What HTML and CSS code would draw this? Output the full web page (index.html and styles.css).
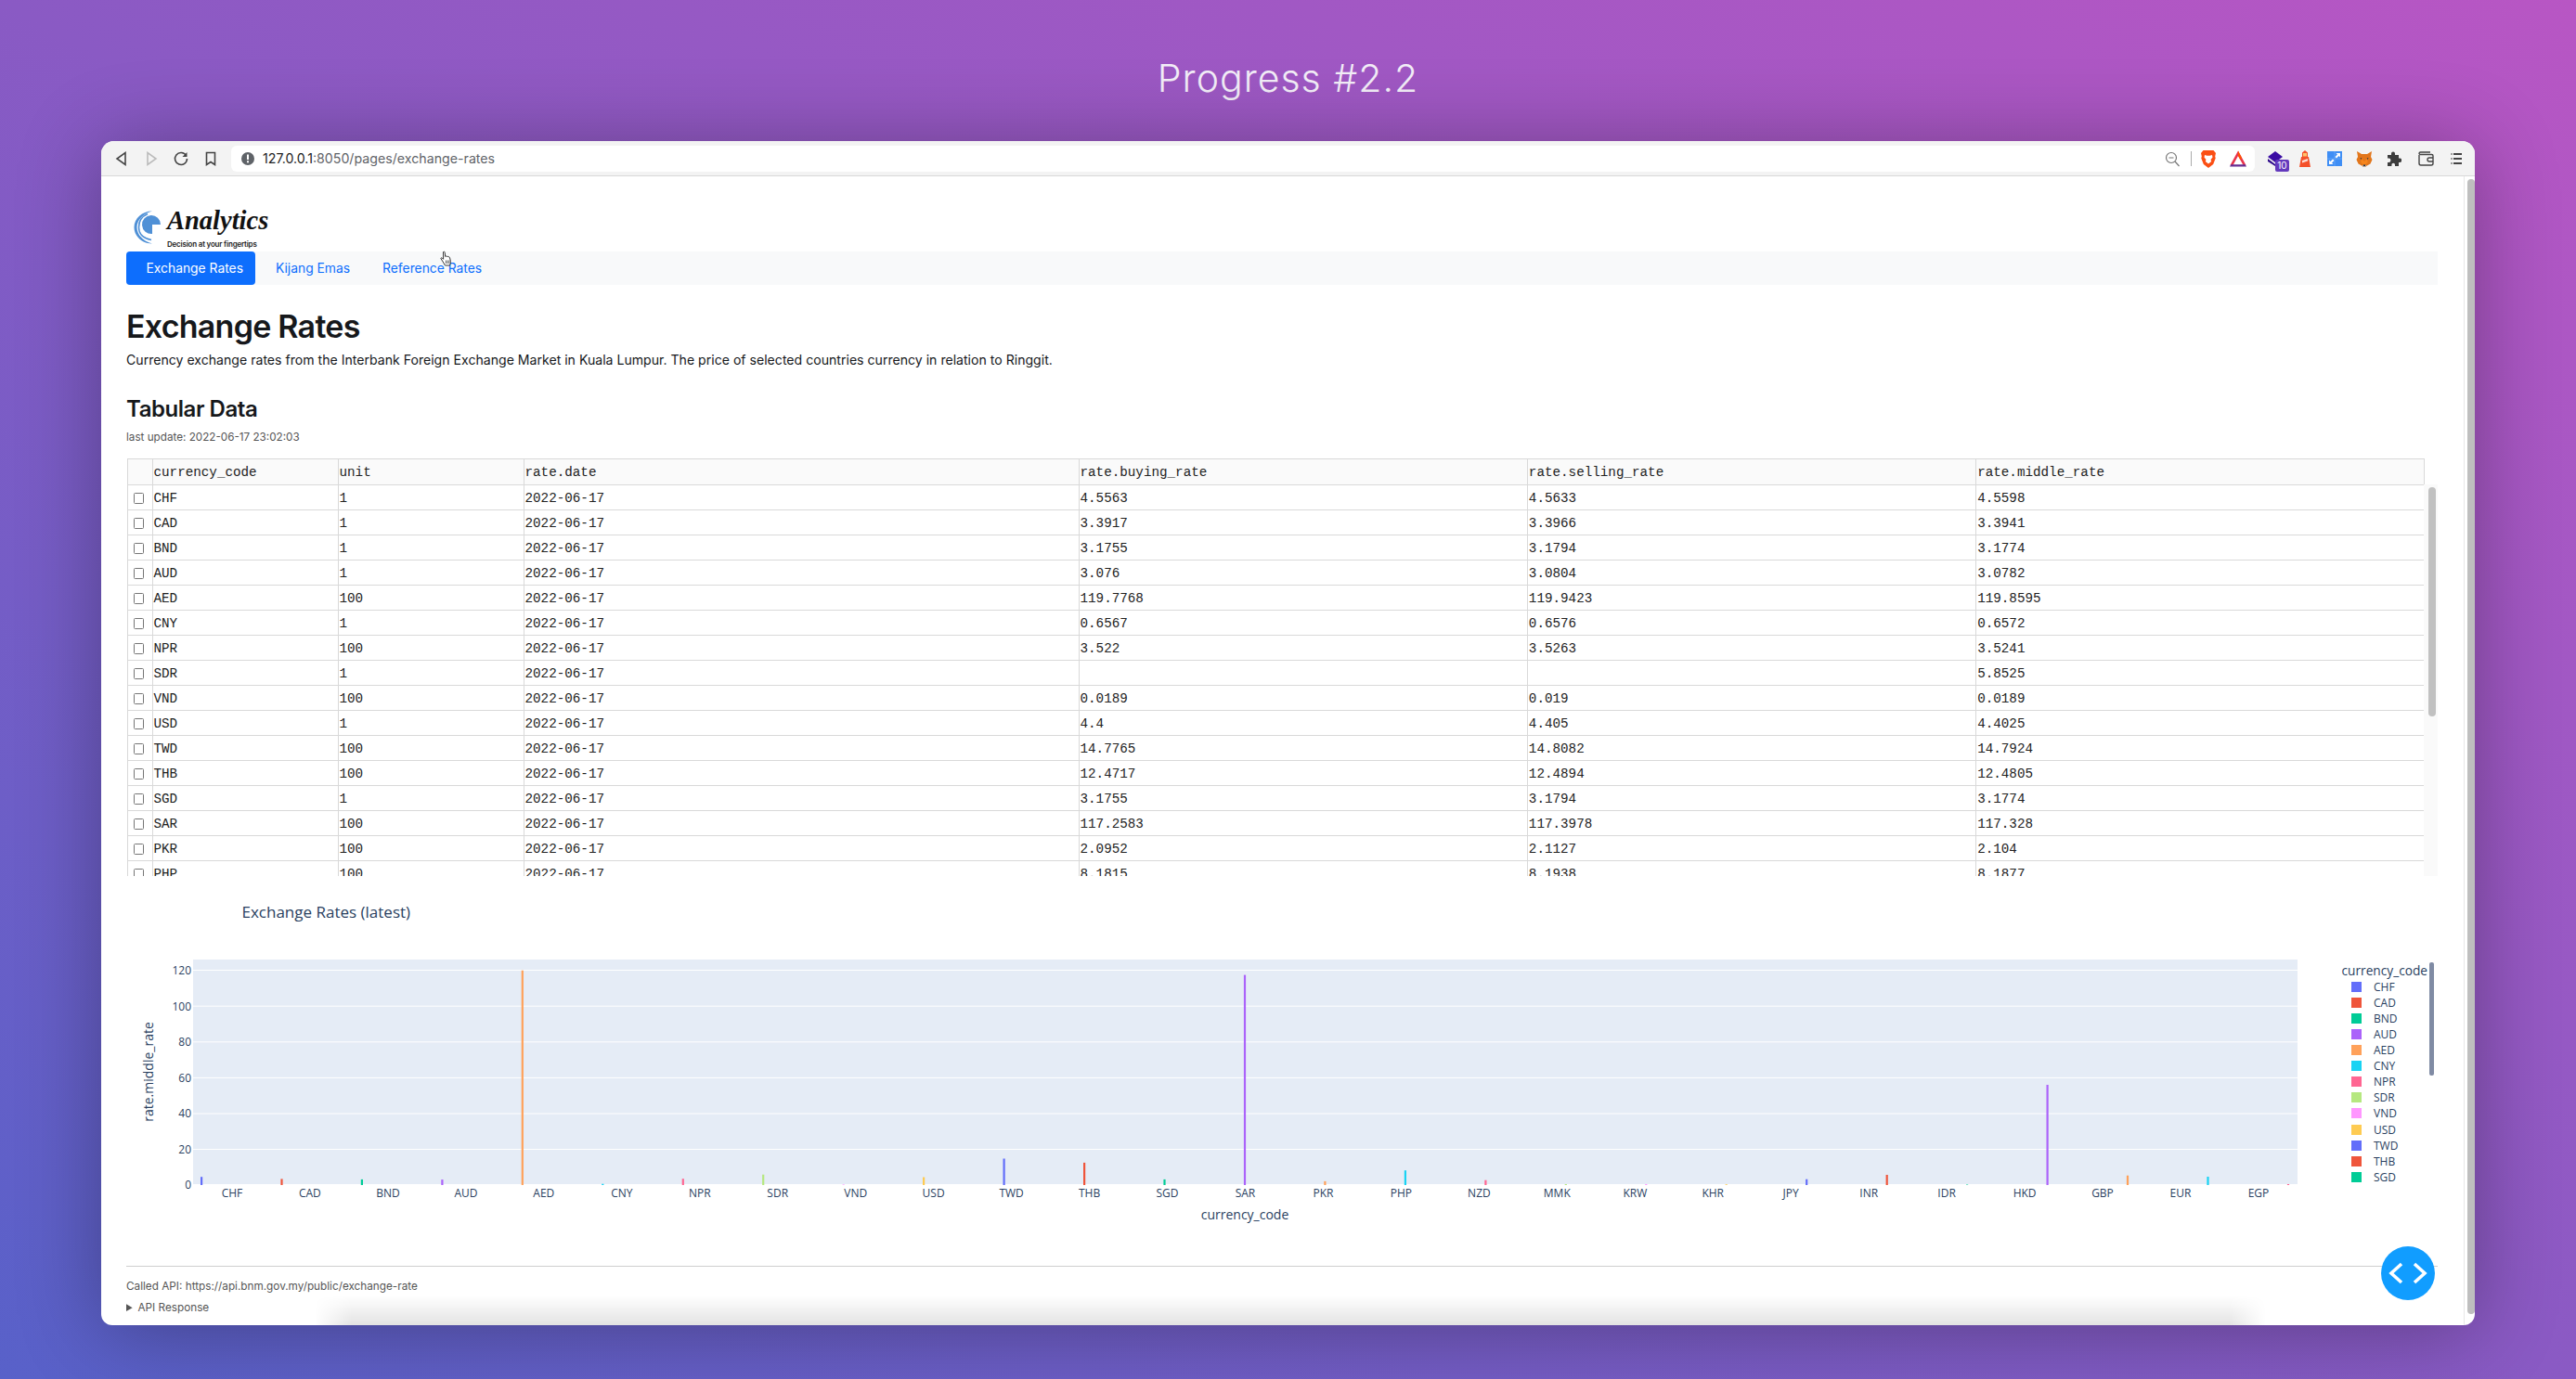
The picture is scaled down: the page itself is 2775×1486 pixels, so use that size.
FILE: index.html
```html
<!DOCTYPE html>
<html lang="en">
<head>
<meta charset="utf-8">
<title>Progress #2.2</title>
<link rel="stylesheet" href="styles.css">
</head>
<body>
<h1 class="slide-title">Progress #2.2</h1>
<div class="window">
  <div class="toolbar">
    <button class="tb-btn"><svg width="20" height="20" viewBox="0 0 20 20"><path class="ic-line" d="M14 3.500v13L5 10z"/></svg></button>
    <button class="tb-btn"><svg width="20" height="20" viewBox="0 0 20 20"><path class="ic-line ic-off" d="M6 3.500v13l9-6.500z"/></svg></button>
    <button class="tb-btn"><svg width="20" height="20" viewBox="0 0 20 20"><path class="ic-line" d="M15.500 6.500A6.500 6.500 0 1 0 16.500 10"/><path class="ic-fill" d="M16.500 3v5h-5z"/></svg></button>
    <button class="tb-btn"><svg width="20" height="20" viewBox="0 0 20 20"><path class="ic-line" d="M5.500 3.500h9v13l-4.500-3-4.500 3z"/></svg></button>
    <div class="address">
      <svg class="info" width="16" height="16" viewBox="0 0 16 16"><circle cx="8" cy="8" r="7" fill="#5f6368"/><rect x="7" y="3.500" width="2" height="5.500" fill="#fff"/><rect x="7" y="10.300" width="2" height="2" fill="#fff"/></svg>
      <span class="url"><span class="url-host">127.0.0.1</span>:8050/pages/exchange-rates</span>
      <svg class="zoom-out" width="24" height="20" viewBox="0 0 24 20"><circle cx="11" cy="9" r="5.500" class="ic-thin"/><path class="ic-thin" d="M8.500 9h5M15 13l4.500 5"/></svg>
      <span class="addr-div"></span>
      <span class="tb-btn"><svg width="18" height="20" viewBox="0 0 18 20"><path fill="#fb4f14" d="M3.500 1h11l2.500 3-.8 3.500.5 2-2.500 6.500L9 20l-5.200-4L1.300 9.500l.5-2L1 4z"/><path fill="#fff" d="M5 6l2.500.8h3L13 6l.5 2.500-2 2.500.7 2L9 15.500 5.800 13l.7-2-2-2.500z"/></svg></span>
      <span class="tb-btn"><svg width="20" height="20" viewBox="0 0 20 20"><path fill="#e8344e" d="M10 1.500 18.500 17H15.500L10 7 4.500 17H1.500z"/><path fill="#662d91" d="M1 18.500l1.200-2.300h15.600l1.200 2.300z"/><path fill="#ff5000" d="M10 1.500 14 9l-1.500 2.500L10 7z"/></svg></span>
    </div>
    <span class="tb-btn ext"><svg width="18" height="18" viewBox="0 0 18 18"><path fill="#3a0ca3" d="M9 1l8 6-8 6-8-6z"/><path fill="#2d0a8a" d="M1 9l4 3 4 3v2L1 12z"/></svg><span class="badge">10</span></span>
    <span class="tb-btn"><svg width="14" height="20" viewBox="0 0 14 20"><path fill="#f4502a" d="M4 3.500 7 1l3 2.500V8h1l2 11H1L3 8h1z"/><rect x="5" y="4" width="4" height="3.500" fill="#ffc46b"/><path fill="#fff" d="M4 12l6-2v2.500l-6 2z" opacity=".8"/></svg></span>
    <span class="tb-btn"><svg width="16" height="16" viewBox="0 0 16 16"><rect width="16" height="16" fill="#3f8ef5"/><path d="M8 0v16M0 8h16" stroke="#6aa9f8" stroke-width=".8"/><path fill="#fff" d="M9.500 2H14v4.500L12.500 5 10 7.500 8.500 6 11 3.500zM6.500 14H2V9.500L3.500 11 6 8.500 7.500 10 5 12.500z"/></svg></span>
    <span class="tb-btn"><svg width="18" height="18" viewBox="0 0 18 18"><path fill="#e2761b" d="M1 1l5 3h6l5-3-1 6 1.500 3-2 4.500L11 17H7l-4.500-2.500-2-4.500L2 7z"/><path fill="#f6851b" d="M6 9l3 3 3-3 .8 4L9 16l-3.800-3z"/><path fill="#c0ad9e" d="M7 16h4v2H7z"/><path fill="#233447" d="M8 15.500h2V17H8zM4.500 8l1.800.5-.8 1.500zM13.500 8l-1.800.5.800 1.500z"/></svg></span>
    <span class="tb-btn"><svg width="16" height="16" viewBox="0 0 16 16"><path fill="#3c3c3c" d="M1 4h4V2.500a2 2 0 0 1 4 0V4h4v3.500h1a2.200 2.200 0 0 1 0 4.500h-1v4H9v-1.500a1.800 1.800 0 0 0-3.600 0V16H1v-4h1.200a2.200 2.200 0 0 0 0-4.500H1z"/></svg></span>
    <span class="tb-btn wallet"><svg width="18" height="16" viewBox="0 0 18 16"><path class="ic-line ic-wallet" d="M2 4V13a2 2 0 0 0 2 2h11a2 2 0 0 0 2-2V5a1.500 1.500 0 0 0-1.500-1.500H3.500A1.500 1.500 0 0 1 2 2.500 1.500 1.500 0 0 1 3.500 1H14"/><path class="ic-line ic-wallet" d="M17 7h-4a2 2 0 0 0 0 4h4"/></svg></span>
    <span class="tb-btn wallet"><svg width="14" height="14" viewBox="0 0 14 14"><path d="M3 2h9M3 7h9M3 12h9" stroke="#444" stroke-width="1.800"/><path d="M.5 2h1M.5 7h1M.5 12h1" stroke="#444" stroke-width="1.800"/></svg></span>
  </div>

  <div class="viewport">
    <main class="content">
      <div class="logo">
        <svg class="logo-mark" width="30" height="36" viewBox="0 0 30 36"><path fill="#4f90d6" d="M29 15A10 10 0 1 0 20 25V15z"/><path fill="#4f90d6" d="M20 .5C9 .5 .5 8.500 .5 18S9 35.500 20 35.500C12 33.500 3.500 27 3.500 18S12 2.500 20 .5z"/><path class="logo-arc" d="M15 3.500C8 6.500 5.500 12 5.500 18S9 29.500 19 31.500"/></svg>
        <div class="logo-words">
          <span class="logo-name">Analytics</span>
          <span class="logo-tag">Decision at your fingertips</span>
        </div>
      </div>
      <nav class="nav">
        <a class="nav-link active">Exchange Rates</a>
        <a class="nav-link">Kijang Emas</a>
        <a class="nav-link">Reference Rates</a>
        <svg class="cursor" width="14" height="18" viewBox="0 0 14 18"><path fill="#fff" stroke="#222" stroke-width=".9" d="M3.500 1.500c.9-.8 1.800 0 1.800 1l.4 4 .6-.5c.6-.3 1.100 0 1.300.5.6-.4 1.200-.2 1.400.4.700-.3 1.300 0 1.500.7l.9 3.900c.2 1.500-.2 3-1 4.500H5.500L2.500 11 1 8.800c-.3-.9.600-1.400 1.300-.8l1.300 1.300z"/><path d="M6.500 10.500v3.500M8.300 10.500v3.500M10 10.500v3.500" stroke="#222" stroke-width=".7"/></svg>
      </nav>
      <h1 class="page-title">Exchange Rates</h1>
      <p class="lead">Currency exchange rates from the Interbank Foreign Exchange Market in Kuala Lumpur. The price of selected countries currency in relation to Ringgit.</p>
      <h2 class="section-title">Tabular Data</h2>
      <div class="updated">last update: 2022-06-17 23:02:03</div>

      <div class="table-wrap">
        <table class="grid">
          <colgroup><col class="w-check"><col class="w-code"><col class="w-code"><col class="w-date"><col class="w-rate"><col class="w-rate"><col class="w-rate"></colgroup>
          <thead><tr><th></th><th>currency_code</th><th>unit</th><th>rate.date</th><th>rate.buying_rate</th><th>rate.selling_rate</th><th>rate.middle_rate</th></tr></thead>
          <tbody>
            <tr><td class="chk"><input type="checkbox"></td><td>CHF</td><td>1</td><td>2022-06-17</td><td>4.5563</td><td>4.5633</td><td>4.5598</td></tr>
            <tr><td class="chk"><input type="checkbox"></td><td>CAD</td><td>1</td><td>2022-06-17</td><td>3.3917</td><td>3.3966</td><td>3.3941</td></tr>
            <tr><td class="chk"><input type="checkbox"></td><td>BND</td><td>1</td><td>2022-06-17</td><td>3.1755</td><td>3.1794</td><td>3.1774</td></tr>
            <tr><td class="chk"><input type="checkbox"></td><td>AUD</td><td>1</td><td>2022-06-17</td><td>3.076</td><td>3.0804</td><td>3.0782</td></tr>
            <tr><td class="chk"><input type="checkbox"></td><td>AED</td><td>100</td><td>2022-06-17</td><td>119.7768</td><td>119.9423</td><td>119.8595</td></tr>
            <tr><td class="chk"><input type="checkbox"></td><td>CNY</td><td>1</td><td>2022-06-17</td><td>0.6567</td><td>0.6576</td><td>0.6572</td></tr>
            <tr><td class="chk"><input type="checkbox"></td><td>NPR</td><td>100</td><td>2022-06-17</td><td>3.522</td><td>3.5263</td><td>3.5241</td></tr>
            <tr><td class="chk"><input type="checkbox"></td><td>SDR</td><td>1</td><td>2022-06-17</td><td></td><td></td><td>5.8525</td></tr>
            <tr><td class="chk"><input type="checkbox"></td><td>VND</td><td>100</td><td>2022-06-17</td><td>0.0189</td><td>0.019</td><td>0.0189</td></tr>
            <tr><td class="chk"><input type="checkbox"></td><td>USD</td><td>1</td><td>2022-06-17</td><td>4.4</td><td>4.405</td><td>4.4025</td></tr>
            <tr><td class="chk"><input type="checkbox"></td><td>TWD</td><td>100</td><td>2022-06-17</td><td>14.7765</td><td>14.8082</td><td>14.7924</td></tr>
            <tr><td class="chk"><input type="checkbox"></td><td>THB</td><td>100</td><td>2022-06-17</td><td>12.4717</td><td>12.4894</td><td>12.4805</td></tr>
            <tr><td class="chk"><input type="checkbox"></td><td>SGD</td><td>1</td><td>2022-06-17</td><td>3.1755</td><td>3.1794</td><td>3.1774</td></tr>
            <tr><td class="chk"><input type="checkbox"></td><td>SAR</td><td>100</td><td>2022-06-17</td><td>117.2583</td><td>117.3978</td><td>117.328</td></tr>
            <tr><td class="chk"><input type="checkbox"></td><td>PKR</td><td>100</td><td>2022-06-17</td><td>2.0952</td><td>2.1127</td><td>2.104</td></tr>
            <tr><td class="chk"><input type="checkbox"></td><td>PHP</td><td>100</td><td>2022-06-17</td><td>8.1815</td><td>8.1938</td><td>8.1877</td></tr>
          </tbody>
        </table>
        <div class="table-scroll"><span class="table-thumb"></span></div>
      </div>

      <svg class="chart" width="2491" height="420" viewBox="136 944 2491 420">
        <text class="chart-title" x="260.500" y="989">Exchange Rates (latest)</text>
        <rect class="plot" x="208" y="1034" width="2267" height="242"/>
        <path class="gridline" d="M208 1045.500H2475M208 1084.200H2475M208 1122.800H2475M208 1161.400H2475M208 1200H2475M208 1238.500H2475"/>
        <g class="ytick">
          <text x="206" y="1050">120</text><text x="206" y="1089">100</text><text x="206" y="1127">80</text><text x="206" y="1166">60</text><text x="206" y="1204">40</text><text x="206" y="1243">20</text><text x="206" y="1281">0</text>
        </g>
        <text class="axis-title" transform="translate(165 1155) rotate(-90)">rate.middle_rate</text>
        <text class="axis-title" x="1341" y="1314">currency_code</text>
        <g>
          <rect class="c0" x="216" y="1268.200" width="2.200" height="8.800"/>
          <rect class="c1" x="302.400" y="1270.400" width="2.200" height="6.600"/>
          <rect class="c2" x="388.800" y="1270.900" width="2.200" height="6.100"/>
          <rect class="c3" x="475.300" y="1271.100" width="2.200" height="5.900"/>
          <rect class="c4" x="561.700" y="1045.700" width="2.200" height="231.300"/>
          <rect class="c5" x="648.200" y="1275.700" width="2.200" height="1.300"/>
          <rect class="c6" x="734.700" y="1270.200" width="2.200" height="6.800"/>
          <rect class="c7" x="821.100" y="1265.700" width="2.200" height="11.300"/>
          <rect class="c8" x="907.600" y="1276.400" width="2.200" height=".6"/>
          <rect class="c9" x="994" y="1268.500" width="2.200" height="8.500"/>
          <rect class="c0" x="1080.500" y="1248.500" width="2.200" height="28.500"/>
          <rect class="c1" x="1167" y="1252.900" width="2.200" height="24.100"/>
          <rect class="c2" x="1253.400" y="1270.900" width="2.200" height="6.100"/>
          <rect class="c3" x="1339.900" y="1050.600" width="2.200" height="226.400"/>
          <rect class="c4" x="1426.300" y="1272.900" width="2.200" height="4.100"/>
          <rect class="c5" x="1512.800" y="1261.200" width="2.200" height="15.800"/>
          <rect class="c6" x="1599.300" y="1271.700" width="2.200" height="5.300"/>
          <rect class="c7" x="1685.700" y="1276" width="2.200" height="1"/>
          <rect class="c8" x="1772.200" y="1276" width="2.200" height="1"/>
          <rect class="c9" x="1858.600" y="1276.200" width="2.200" height=".8"/>
          <rect class="c0" x="1945.100" y="1270.700" width="2.200" height="6.300"/>
          <rect class="c1" x="2031.600" y="1266" width="2.200" height="11"/>
          <rect class="c2" x="2118" y="1276.500" width="2.200" height=".5"/>
          <rect class="c3" x="2204.500" y="1169" width="2.200" height="108"/>
          <rect class="c4" x="2290.900" y="1266.700" width="2.200" height="10.300"/>
          <rect class="c5" x="2377.400" y="1268" width="2.200" height="9"/>
          <rect class="c6" x="2463.900" y="1276" width="2.200" height="1"/>
        </g>
        <g class="xtick">
          <text x="250" y="1290">CHF</text><text x="333.900" y="1290">CAD</text><text x="417.900" y="1290">BND</text><text x="501.900" y="1290">AUD</text><text x="585.800" y="1290">AED</text><text x="669.800" y="1290">CNY</text><text x="753.800" y="1290">NPR</text><text x="837.700" y="1290">SDR</text><text x="921.700" y="1290">VND</text><text x="1005.600" y="1290">USD</text><text x="1089.600" y="1290">TWD</text><text x="1173.600" y="1290">THB</text><text x="1257.500" y="1290">SGD</text><text x="1341.500" y="1290">SAR</text><text x="1425.400" y="1290">PKR</text><text x="1509.400" y="1290">PHP</text><text x="1593.400" y="1290">NZD</text><text x="1677.300" y="1290">MMK</text><text x="1761.300" y="1290">KRW</text><text x="1845.200" y="1290">KHR</text><text x="1929.200" y="1290">JPY</text><text x="2013.200" y="1290">INR</text><text x="2097.100" y="1290">IDR</text><text x="2181.100" y="1290">HKD</text><text x="2265" y="1290">GBP</text><text x="2349" y="1290">EUR</text><text x="2433" y="1290">EGP</text>
        </g>
        <text class="legend-title" x="2522.500" y="1051">currency_code</text>
        <g class="legend">
          <rect class="c0" x="2533" y="1058" width="11" height="11"/><text x="2557" y="1068">CHF</text>
          <rect class="c1" x="2533" y="1075" width="11" height="11"/><text x="2557" y="1085">CAD</text>
          <rect class="c2" x="2533" y="1092" width="11" height="11"/><text x="2557" y="1102">BND</text>
          <rect class="c3" x="2533" y="1109" width="11" height="11"/><text x="2557" y="1119">AUD</text>
          <rect class="c4" x="2533" y="1126" width="11" height="11"/><text x="2557" y="1136">AED</text>
          <rect class="c5" x="2533" y="1143" width="11" height="11"/><text x="2557" y="1153">CNY</text>
          <rect class="c6" x="2533" y="1160" width="11" height="11"/><text x="2557" y="1170">NPR</text>
          <rect class="c7" x="2533" y="1177" width="11" height="11"/><text x="2557" y="1187">SDR</text>
          <rect class="c8" x="2533" y="1194" width="11" height="11"/><text x="2557" y="1204">VND</text>
          <rect class="c9" x="2533" y="1212" width="11" height="11"/><text x="2557" y="1222">USD</text>
          <rect class="c0" x="2533" y="1229" width="11" height="11"/><text x="2557" y="1239">TWD</text>
          <rect class="c1" x="2533" y="1246" width="11" height="11"/><text x="2557" y="1256">THB</text>
          <rect class="c2" x="2533" y="1263" width="11" height="11"/><text x="2557" y="1273">SGD</text>
        </g>
        <rect class="legend-thumb" x="2617" y="1037" width="5" height="122" rx="2"/>
      </svg>

      <hr class="rule">
      <div class="api-url">Called API: https://api.bnm.gov.my/public/exchange-rate</div>
      <details class="api-details"><summary>API Response</summary></details>
    </main>
    <div class="page-scroll"><span class="page-thumb"></span></div>
  </div>

  <span class="bottom-shade"></span>
  <button class="fab"><svg width="58" height="58" viewBox="0 0 58 58"><path d="M22 19 11 29l11 10M36 19l11 10-11 10" fill="none" stroke="#fff" stroke-width="3.600"/></svg></button>
</div>
</body>
</html>
```

FILE: styles.css
```css
* { box-sizing: border-box; }
html, body { margin: 0; padding: 0; }
body {
  width: 2775px;
  height: 1486px;
  overflow: hidden;
  background: linear-gradient(to top right, #5861c9 0%, #8a5ac4 50%, #b856c4 100%);
  font-family: Inter, "Liberation Sans", sans-serif;
  color: #16181b;
}
.slide-title {
  margin: 0;
  height: 152px;
  padding-top: 59px;
  text-align: center;
  font-family: Inter, sans-serif;
  font-weight: 300;
  font-size: 41px;
  line-height: 50px;
  letter-spacing: 1px;
  color: #f3eef8;
}
.window {
  position: relative;
  margin-left: 109px;
  width: 2557px;
  height: 1276px;
  border-radius: 14px 14px 12px 12px;
  overflow: hidden;
  background: #fff;
  box-shadow: 0 6px 90px rgba(0, 0, 0, .32);
  display: flex;
  flex-direction: column;
}
.toolbar {
  flex: none;
  height: 38px;
  background: #f3f3f3;
  border-bottom: 1px solid #d9d9d9;
  display: flex;
  align-items: center;
  padding-left: 6px;
}
.tb-btn {
  flex: none;
  width: 32px;
  height: 28px;
  padding: 0;
  border: 0;
  background: none;
  display: flex;
  align-items: center;
  justify-content: center;
  position: relative;
}
.wallet { margin-left: 2px; }
.ic-line { fill: none; stroke: #444; stroke-width: 1.6; }
.ic-off { stroke: #bbb; }
.ic-fill { fill: #444; }
.ic-thin { fill: none; stroke: #777; stroke-width: 1.2; }
.ic-wallet { stroke-width: 1.4; }
.address {
  flex: none;
  width: 2180px;
  height: 28px;
  margin: 0 6px;
  background: #fff;
  border-radius: 6px;
  display: flex;
  align-items: center;
  padding: 0 2px 0 10px;
}
.info { flex: none; }
.url {
  flex: 1;
  margin-left: 8px;
  font-size: 14.2px;
  color: #5f6368;
}
.url-host { color: #222; }
.zoom-out { flex: none; margin-right: 8px; }
.addr-div { flex: none; width: 1px; height: 16px; margin-right: 2px; background: #aaa; }
.badge {
  position: absolute;
  left: 16px;
  top: 15px;
  width: 15px;
  height: 13px;
  border-radius: 2px;
  background: #6339bd;
  color: #fff;
  font-size: 10px;
  line-height: 13px;
  text-align: center;
}
.viewport {
  flex: 1;
  min-height: 0;
  display: flex;
}
.content {
  flex: none;
  width: 2545px;
  padding: 32px 28px 0 27px;
}
.page-scroll {
  flex: none;
  width: 12px;
  border-left: 1px solid #e8e8e8;
  padding: 3px 0 12px 3px;
  display: flex;
}
.page-thumb { flex: 1; background: #bebebe; border-radius: 4px; }
.logo {
  height: 49px;
  display: flex;
  padding: 0 0 0 8px;
}
.logo-mark { flex: none; margin-top: 5px; }
.logo-arc { fill: none; stroke: #4f90d6; stroke-width: 1.600; }
.logo-words {
  margin-left: 6px;
  display: flex;
  flex-direction: column;
}
.logo-name {
  font-family: "Liberation Serif", serif;
  font-style: italic;
  font-weight: 700;
  font-size: 28.500px;
  line-height: 32px;
  color: #111;
}
.logo-tag {
  margin-top: 4px;
  font-size: 8px;
  line-height: 10px;
  font-weight: 600;
  color: #222;
  letter-spacing: -.2px;
}
.nav {
  position: relative;
  height: 36px;
  background: #f8f9fa;
  display: flex;
  align-items: stretch;
}
.nav-link {
  padding: 0 13.500px 0 21.500px;
  font-size: 13.850px;
  line-height: 36px;
  color: #0d6efd;
}
.nav-link.active {
  background: #0d6efd;
  color: #fff;
  border-radius: 4px;
}
.cursor { position: absolute; left: 338px; top: -1px; }
.page-title {
  margin: 25px 0 0;
  font-size: 34px;
  line-height: 40px;
  font-weight: 600;
  letter-spacing: -.75px;
}
.lead {
  margin: 6px 0 0;
  font-size: 14.100px;
  line-height: 20px;
}
.section-title {
  margin: 28px 0 0;
  font-size: 24px;
  line-height: 30px;
  font-weight: 600;
  letter-spacing: -.45px;
}
.updated {
  margin-top: 7px;
  font-size: 11.700px;
  line-height: 16px;
  color: #555;
}
.table-wrap {
  position: relative;
  margin-top: 15px;
  height: 450px;
  overflow: hidden;
}
.grid {
  table-layout: fixed;
  border-collapse: collapse;
  width: 2475px;
  margin-left: .5px;
  font-family: "Liberation Mono", monospace;
  font-size: 14.250px;
  color: #222;
}
.w-check { width: 27px; }
.w-code { width: 200px; }
.w-date { width: 598px; }
.w-rate { width: 483.330px; }
.grid th, .grid td {
  border: 1px solid #d9d9d9;
  padding: 2px 1px 0;
  height: 27px;
  text-align: left;
  font-weight: 400;
  white-space: nowrap;
  overflow: hidden;
}
.grid th { height: 28px; padding-top: 0; background: #fafafa; }
.grid input {
  appearance: none;
  display: block;
  width: 11px;
  height: 11.500px;
  margin: 0 0 0 5.500px;
  border: 1px solid #767676;
  border-radius: 1.500px;
  background: #fff;
}
.table-scroll {
  position: absolute;
  left: 2475px;
  top: 28px;
  bottom: 0;
  width: 16px;
  background: #fafafa;
  padding: 3px 3px 0 5px;
}
.table-thumb {
  display: block;
  height: 247px;
  background: #c1c1c1;
  border-radius: 4px;
}
.chart { display: block; }
.plot { fill: #e5ecf6; }
.gridline { stroke: #fff; stroke-width: 1; fill: none; }
.chart-title { font-family: "Open Sans", sans-serif; font-size: 17px; fill: #2a3f5f; }
.ytick text, .xtick text, .legend text { font-family: "Open Sans", sans-serif; font-size: 12px; fill: #2a3f5f; }
.ytick text { text-anchor: end; }
.xtick text { text-anchor: middle; }
.axis-title { font-family: "Open Sans", sans-serif; font-size: 14px; fill: #2a3f5f; text-anchor: middle; }
.legend-title { font-family: "Open Sans", sans-serif; font-size: 13.700px; fill: #2a3f5f; }
.legend-thumb { fill: #808ba4; }
.c0 { fill: #636efa; }
.c1 { fill: #ef553b; }
.c2 { fill: #00cc96; }
.c3 { fill: #ab63fa; }
.c4 { fill: #ffa15a; }
.c5 { fill: #19d3f3; }
.c6 { fill: #ff6692; }
.c7 { fill: #b6e880; }
.c8 { fill: #ff97ff; }
.c9 { fill: #fecb52; }
.rule { margin: 0; border: 0; border-top: 1px solid #cfcfcf; }
.api-url {
  margin-top: 14px;
  font-size: 11.750px;
  line-height: 14px;
  color: #555;
}
.api-details {
  margin-top: 9px;
  font-size: 11.750px;
  line-height: 14px;
  color: #555;
}
.bottom-shade {
  position: absolute;
  left: 230px;
  right: 225px;
  bottom: 0;
  height: 32px;
  background: linear-gradient(to bottom, rgba(0, 0, 0, 0), rgba(0, 0, 0, .11));
  -webkit-mask-image: linear-gradient(to right, transparent, #000 40px, #000 calc(100% - 40px), transparent);
  mask-image: linear-gradient(to right, transparent, #000 40px, #000 calc(100% - 40px), transparent);
  pointer-events: none;
}
.fab {
  position: absolute;
  right: 43px;
  bottom: 27px;
  width: 58px;
  height: 58px;
  padding: 0;
  border: 0;
  border-radius: 50%;
  background: #119dff;
}
.fab svg { display: block; }
```
